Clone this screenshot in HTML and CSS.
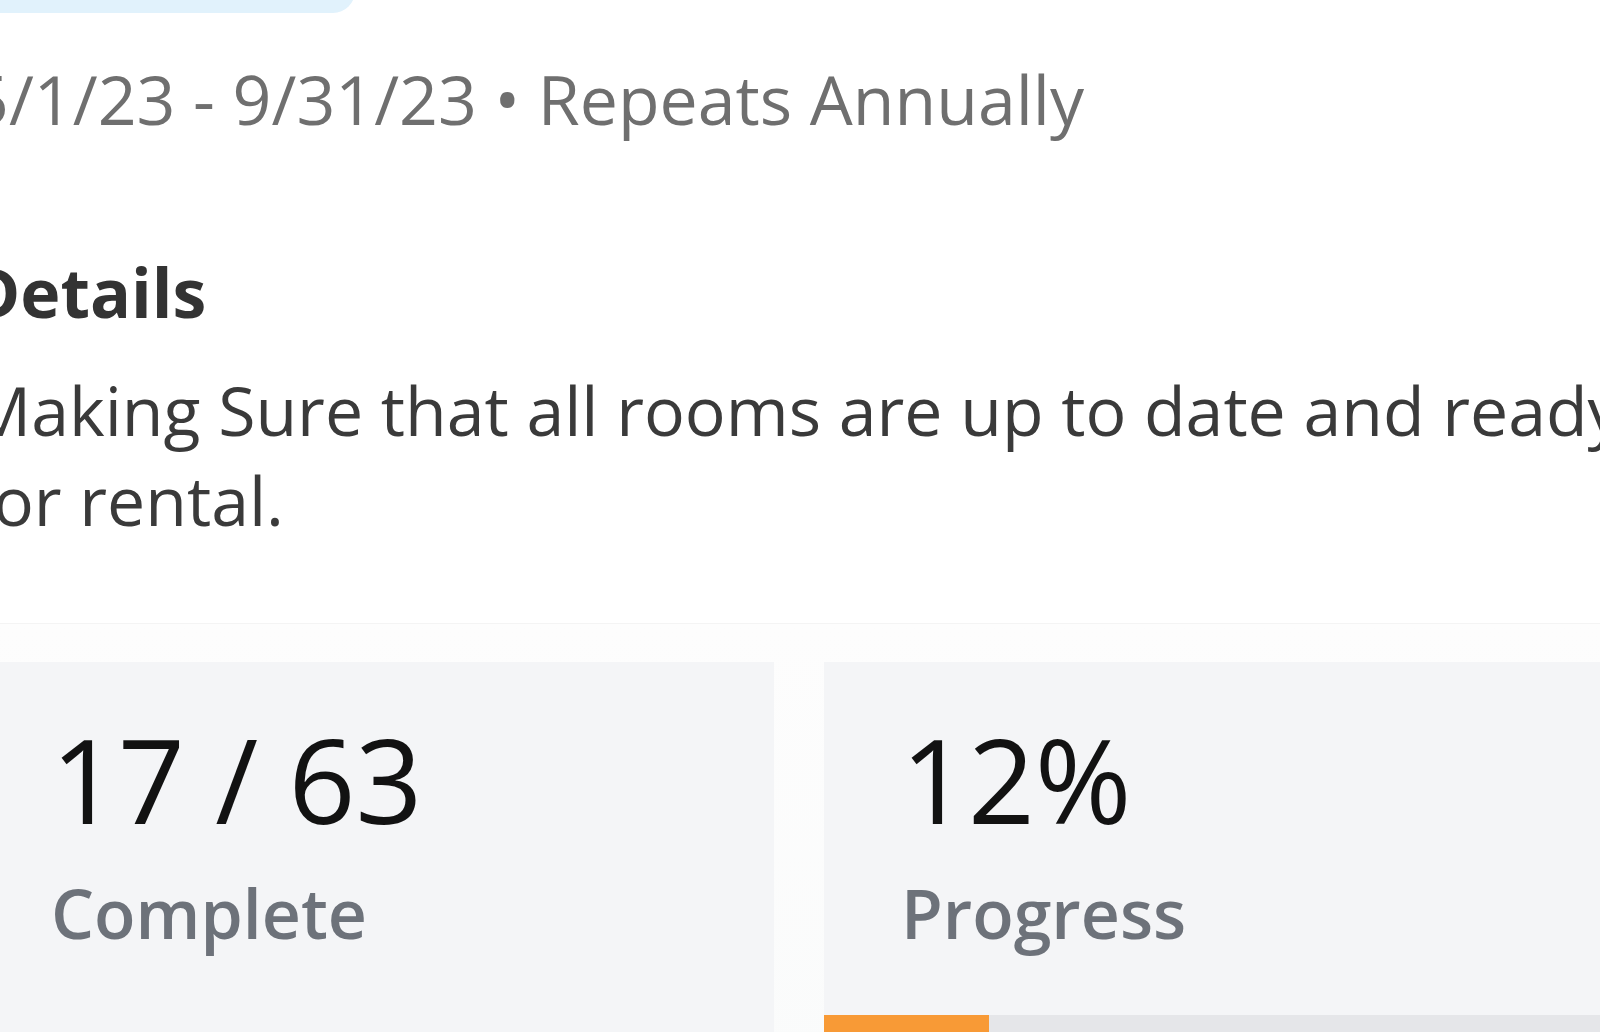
FILE: index.html
```html
<!DOCTYPE html>
<html lang="en">
<head>
<meta charset="utf-8">
<title>Room Readiness</title>
<link rel="stylesheet" href="styles.css">
</head>
<body>
<main class="panel">
  <div class="tag-strip"></div>
  <p class="schedule">5/1/23 - 9/31/23 • Repeats Annually</p>

  <section class="details">
    <h2 class="details-title">Details</h2>
    <p class="details-text">Making Sure that all rooms are up to date and ready for rental.</p>
  </section>

  <section class="stats">
    <div class="stat-card">
      <div class="stat-body">
        <div class="stat-value">17 / 63</div>
        <div class="stat-label">Complete</div>
      </div>
    </div>
    <div class="stat-card">
      <div class="stat-body">
        <div class="stat-value">12%</div>
        <div class="stat-label">Progress</div>
      </div>
      <div class="progress-track">
        <div class="progress-fill" style="width: 165px"></div>
      </div>
    </div>
  </section>
</main>
</body>
</html>
```

FILE: styles.css
```css
html, body {
  margin: 0;
  padding: 0;
  background: #ffffff;
  overflow: hidden;
}

body {
  width: 1600px;
  height: 1032px;
  font-family: "Open Sans", "Noto Sans", sans-serif;
  color: #333333;
}

.panel {
  margin-left: -30px;
  width: 1690px;
  display: flex;
  flex-direction: column;
}

/* bottom edge of the status pill above the schedule line */
.tag-strip {
  width: 385px;
  height: 40px;
  margin-top: -27px;
  background: #e1f2fc;
  border-radius: 0 0 22px 0;
}

.schedule {
  margin: 42px 0 0;
  font-size: 68px;
  line-height: 88px;
  color: #6f6f6f;
  white-space: nowrap;
}

.details {
  margin-top: 105px;
}

.details-title {
  margin: 0;
  font-size: 68px;
  line-height: 88px;
  font-weight: 700;
  color: #333333;
}

.details-text {
  margin: 29px 0 0;
  font-size: 68px;
  line-height: 90px;
  color: #3a3a3a;
}

.stats {
  margin-top: 78px;
  padding: 38px 0 0 4px;
  border-top: 1px solid #f4f4f4;
  background: linear-gradient(#fdfdfd, #fafbfb);
  display: grid;
  grid-template-columns: 800px 800px;
  column-gap: 50px;
}

.stat-card {
  background: #f4f5f7;
  height: 420px;
  display: flex;
  flex-direction: column;
}

.stat-body {
  padding: 47px 0 0 77px;
  height: 291px;
  box-sizing: border-box;
}

.stat-value {
  font-size: 117px;
  line-height: 140px;
  color: #121212;
  white-space: nowrap;
}

.stat-label {
  margin-top: 20px;
  font-size: 68px;
  line-height: 88px;
  font-weight: 600;
  color: #6d727a;
}

.progress-track {
  margin-top: 62px;
  height: 40px;
  background: #e5e6e9;
}

.progress-fill {
  height: 100%;
  background: #f89a36;
}
```
